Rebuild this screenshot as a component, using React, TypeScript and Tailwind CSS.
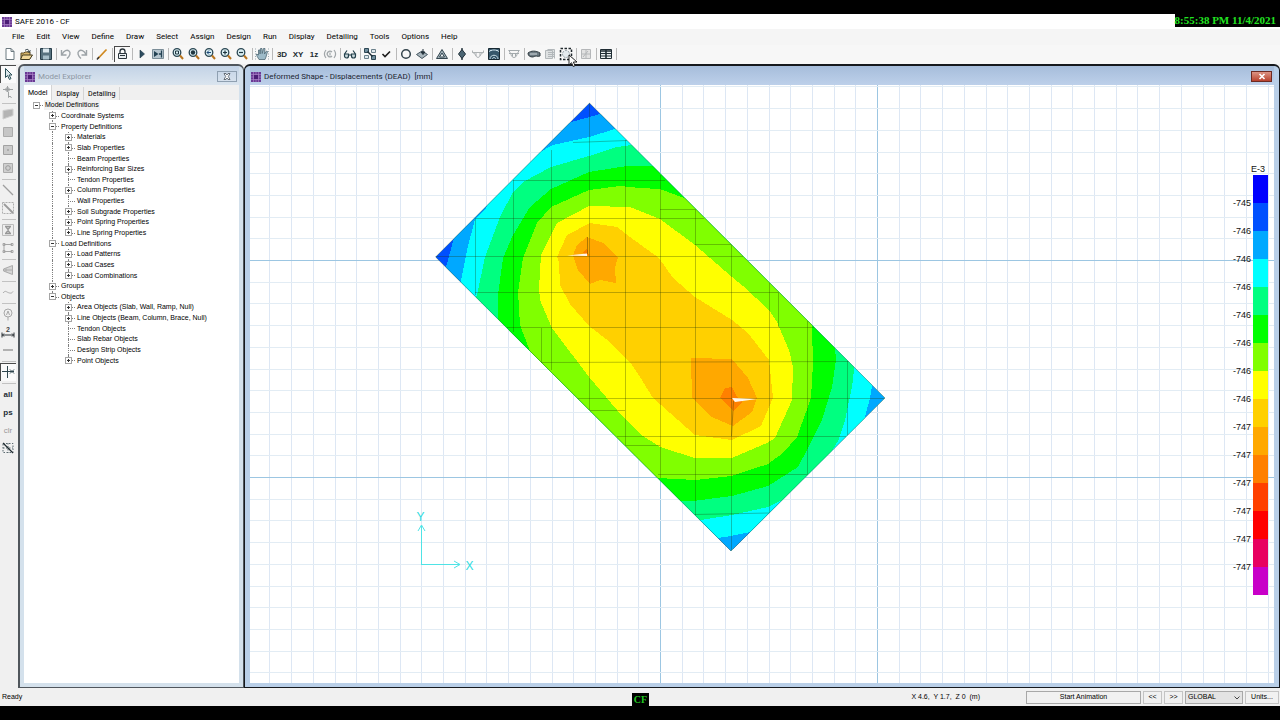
import { useState } from "react";
import type { ReactNode } from "react";
import clsx from "clsx";

const SEP = "sep";

interface Tool {
  name: string;
  art: ReactNode;
  dim?: boolean;
  pressed?: boolean;
}

interface TreeRow {
  level: 0 | 1 | 2;
  text: string;
  box?: "+" | "-";
  last?: boolean;
  guide?: boolean;
}

const MENUS = ["File", "Edit", "View", "Define", "Draw", "Select", "Assign", "Design", "Run", "Display", "Detailing", "Tools", "Options", "Help"];

/* ---------- toolbar drawings, all on a 16 x 16 box ---------- */

function Magnifier({ children }: { children?: ReactNode }) {
  return (
    <>
      <circle cx="7" cy="6.5" r="3.800" fill="#d9eef2" stroke="#2b4753" strokeWidth="1.3" />
      <path d="M10 9.5l3 3.500" stroke="#b8751f" strokeWidth="2" />
      {children}
    </>
  );
}

const glyph = (label: string) => (
  <text x="8" y="11" textAnchor="middle" fontSize="8" fontWeight="700" fill="#222c33" stroke="none" fontFamily="Liberation Sans, sans-serif">
    {label}
  </text>
);

const TOP_TOOLS: (Tool | typeof SEP)[] = [
  { name: "New", art: <path d="M4 2.5h5l3 3v8H4zM9 2.500v3h3" fill="#fff" stroke="#6c7a80" /> },
  {
    name: "Open",
    art: (
      <>
        <path d="M3 7h3l1-1h5v7H3z" fill="#d8b56a" stroke="#5d4a25" />
        <path d="M4.500 9h10l-3 4.500H2.500z" fill="#f2d89a" stroke="#40391f" />
        <path d="M7 4.500c2-2 4-1 4 1m-1.500-.5l1.500 1.500 1.500-2" stroke="#27343c" />
      </>
    ),
  },
  SEP,
  {
    name: "Save",
    art: (
      <>
        <path d="M2.500 2.500h11v11h-11z" fill="#58727f" stroke="#263c48" />
        <path d="M5 2.500h6v4H5z" fill="#dbe8ee" stroke="none" />
        <path d="M5 9.500h6v4H5z" fill="#a7bfca" stroke="none" />
      </>
    ),
  },
  SEP,
  { name: "Undo", dim: true, art: <path d="M3.500 4v5h5M4 8.500c2-4 5-5 7-3.500s1 5-2 7.500" stroke="#878f94" strokeWidth="1.400" /> },
  { name: "Redo", dim: true, art: <path d="M12.500 4v5h-5M12 8.500c-2-4-5-5-7-3.500s-1 5 2 7.500" stroke="#878f94" strokeWidth="1.400" /> },
  SEP,
  {
    name: "Edit pen",
    art: (
      <>
        <path d="M4 12.500l8.500-9" stroke="#d08a22" strokeWidth="1.800" />
        <path d="M3 13.500l2-2.500" stroke="#333" strokeWidth="1.400" />
      </>
    ),
  },
  SEP,
  {
    name: "Lock model",
    pressed: true,
    art: (
      <>
        <path d="M6 7V5.500a2.500 2.500 0 015 0V7" stroke="#2a353c" strokeWidth="1.300" />
        <path d="M4.500 7.500h8v5h-8zM6 9.500h5" fill="#e8edef" stroke="#2a353c" />
      </>
    ),
  },
  SEP,
  { name: "Run analysis", art: <path d="M6 4v8l4.500-4z" fill="#2e4d60" stroke="#1d3644" strokeWidth=".6" /> },
  {
    name: "Run detailing",
    art: (
      <>
        <path d="M2.500 3.500h11v9h-11z" fill="#b7c6cf" stroke="#7b8d98" />
        <path d="M4 5v6l4.500-3z" fill="#234152" stroke="none" />
        <path d="M11.500 4.500v7M9 8h2" stroke="#234152" strokeWidth="1.300" />
      </>
    ),
  },
  SEP,
  { name: "Zoom window", art: <Magnifier><path d="M5.500 5h3v3h-3z" stroke="#1f3640" /></Magnifier> },
  { name: "Zoom full", art: <Magnifier><circle cx="7" cy="6.500" r="2.200" fill="#1f3640" stroke="none" /></Magnifier> },
  { name: "Zoom previous", art: <Magnifier><path d="M9 6.500H5l2-2M5 6.500l2 2" stroke="#1f4a7a" /></Magnifier> },
  { name: "Zoom in", art: <Magnifier><path d="M5 6.500h4M7 4.500v4" stroke="#1f3640" strokeWidth="1.200" /></Magnifier> },
  { name: "Zoom out", art: <Magnifier><path d="M5 6.500h4" stroke="#1f3640" strokeWidth="1.200" /></Magnifier> },
  SEP,
  {
    name: "Pan",
    art: (
      <>
        <path d="M5 13.500c-1-2-2.500-3.500-2.500-5.500l2 1V4H6v4l.5-5.500H8l.2 5 1.300-5H11L10.500 8l2-3 1 .5L12 11l-1 2.500z" fill="#9dbac8" stroke="#4f6874" strokeWidth=".8" />
        <path d="M1.500 2.500v11M14.500 2.500v11" stroke="#9aa9b0" strokeDasharray="1 1.500" />
      </>
    ),
  },
  SEP,
  { name: "3D view", art: glyph("3D") },
  { name: "XY view", art: glyph("XY") },
  { name: "Z view", art: glyph("1z") },
  { name: "Rotate", dim: true, art: <path d="M4 4c-2 2.500-2 5.500 0 8M12 4c2 2.500 2 5.500 0 8M10 6a2.800 2.800 0 100 4M8 6.500v3" stroke="#8b9296" strokeWidth="1.200" /> },
  SEP,
  { name: "Perspective", art: <path d="M2.500 8L5 4.500M13.500 8L11 4.500M2.500 8h4v2a2 2 0 01-4 0zM9.500 8h4v2a2 2 0 01-4 0zM6.500 9h3" stroke="#24414c" strokeWidth="1.200" fill="#c9d8dc" /> },
  SEP,
  {
    name: "Shrink",
    art: (
      <>
        <path d="M2.500 2.500h4v4h-4zM9.500 9.500h4v4h-4z" fill="#6f8d9d" stroke="#2d4754" />
        <path d="M9.500 3.500h4v3h-4zM2.500 9.500h4v3h-4z" fill="#dfe9ee" stroke="#6a808b" />
        <path d="M5.500 5.500l5 5" stroke="#1c2d36" strokeWidth="1.400" />
      </>
    ),
  },
  { name: "Check", art: <path d="M4.500 8l2.500 2.500L12 5.500" stroke="#1d1d1d" strokeWidth="1.600" /> },
  SEP,
  { name: "Display options", art: <circle cx="8" cy="8" r="4.300" stroke="#33434c" strokeWidth="1.500" /> },
  {
    name: "Assign",
    art: (
      <>
        <path d="M2.500 8.500L8 5l5.500 3.500L8 12.500z" fill="#a9b6bd" stroke="#465761" />
        <path d="M9 3v4M7 6l2 2.500L11 6z" fill="#22313a" stroke="#22313a" />
      </>
    ),
  },
  SEP,
  {
    name: "Show undeformed",
    art: (
      <>
        <path d="M8 3.500l5.500 9h-11z" fill="#a4b4bb" stroke="#33454f" />
        <path d="M8 7l2.500 4h-5z" fill="#eef2f4" stroke="#33454f" />
      </>
    ),
  },
  SEP,
  {
    name: "Show loads",
    art: (
      <>
        <path d="M8 2v12" stroke="#22313a" strokeWidth="1.400" />
        <path d="M8 3.500L11.500 8 8 12.500 4.500 8z" fill="#4c6674" stroke="#22313a" />
      </>
    ),
  },
  { name: "Show reactions", dim: true, art: <path d="M2.500 4.500v2c3 0 3 5 5.500 5s2.500-5 5.500-5v-2M2.500 6.500h11M6 6.500v3.500M10 6.500v3.500" stroke="#9aa0a3" /> },
  {
    name: "Show slab forces",
    art: (
      <>
        <path d="M2.500 2.500h11v11h-11z" fill="#36576b" stroke="#172832" />
        <path d="M4 13c0-5 8-5 8 0M3 5.500c3-2 7-2 10 0M6.500 13c0-2 3-2 3 0M4 4.500h2M10 4.500h2" stroke="#c8dce6" />
      </>
    ),
  },
  SEP,
  { name: "Show strip forces", dim: true, art: <path d="M2.500 4.500h11M3 7.500h10M3 4.500l2 4c1 4 5 4 6 0l2-4M6.500 7.500v3M9.500 7.500v3" stroke="#8f979b" /> },
  SEP,
  {
    name: "Show tendons",
    art: (
      <>
        <path d="M2 7c3-2.500 8-2.500 12 0v3c-3 1-4-1-7 1-3 0-5-1-5-4z" fill="#6c7a82" stroke="#303b41" />
        <path d="M4 8h7" stroke="#d3dade" />
      </>
    ),
  },
  { name: "Show report", dim: true, art: <path d="M3.500 4.500h7v8h-7zM5.500 3.500h7v9M6 6.500h7M6 8.500h7M6 10.500h7" fill="#d9dcdd" stroke="#a2a8ab" /> },
  {
    name: "Show section",
    art: (
      <>
        <path d="M2.500 2.500h11v11h-11z" stroke="#20282d" strokeWidth="1.500" strokeDasharray="2.500 1.500" />
        <circle cx="8" cy="8" r="3.500" fill="#e4eaed" stroke="#8d999f" strokeDasharray="2 1" />
      </>
    ),
  },
  SEP,
  { name: "Detailing view", dim: true, art: <path d="M3.500 3.500h9v9h-9zM8 3.500v9M3.500 8h9M5 11l5-6" fill="#dedede" stroke="#a5a8aa" /> },
  SEP,
  {
    name: "Show tables",
    art: (
      <>
        <path d="M2.500 3.500h11v9h-11z" fill="#e9eff1" stroke="#1f2c33" />
        <path d="M2.500 5h11M8 3.500v9" stroke="#1f2c33" strokeWidth="1.600" />
        <path d="M2.500 7.500h11M2.500 10h11" stroke="#1f2c33" />
      </>
    ),
  },
  SEP,
];

const SIDE_TOOLS: (Tool | typeof SEP)[] = [
  { name: "Pointer", pressed: true, art: <path d="M5.500 2.500v9l2-2 2 4 1.500-1-2-3.500h3z" fill="#dce8ec" stroke="#2c5058" /> },
  { name: "Reshape", dim: true, art: <path d="M3 5.500h10M7.500 2v6M6 4h3v3H6zM8.500 8v5.500l1.500-1.500 1.500 2" stroke="#8b8f91" /> },
  SEP,
  { name: "Draw slab", dim: true, art: <path d="M3 4.500l10-1.500v6.500L3 13z" fill="#a6a6a6" stroke="#c8c8c8" /> },
  { name: "Quick slab", dim: true, art: <path d="M3.500 3.500h9v9h-9z" fill="#bcbcbc" stroke="#9a9a9a" /> },
  { name: "Slab at point", dim: true, art: <path d="M3.500 3.500h9v9h-9zM7.500 7.500h1v1h-1z" fill="#c3c3c3" stroke="#8f8f8f" /> },
  { name: "Slab around point", dim: true, art: <><path d="M3.500 3.500h9v9h-9z" fill="#c8c8c8" stroke="#9a9a9a" /><circle cx="8" cy="8" r="2.300" stroke="#858585" /></> },
  SEP,
  { name: "Draw line", dim: true, art: <path d="M3 3l10 10" stroke="#8a8a8a" strokeWidth="1.200" /> },
  { name: "Quick line", dim: true, art: <><path d="M2.500 2.500h11v11h-11z" stroke="#9e9e9e" strokeDasharray="2 1" /><path d="M4 4l9 9" stroke="#858585" strokeWidth="1.800" /></> },
  SEP,
  { name: "Draw column", dim: true, art: <><path d="M2.500 2.500h11v11h-11z" fill="#eee" stroke="#b0b0b0" /><path d="M5 4.500h6M5 11.500h6M6 5l2 2.500L10 5M6 11l2-2.500 2 2.500" stroke="#828282" strokeWidth="1.300" /></> },
  { name: "Draw wall", dim: true, art: <path d="M4 4v8M4 4.500h8M4 11.500h8M3 3.500h2v2H3zM11 3.500h2v2h-2zM3 10.500h2v2H3zM11 10.500h2v2h-2z" stroke="#949494" /> },
  SEP,
  { name: "Draw ramp", dim: true, art: <path d="M12.500 3.500v9l-9-3.500V7zM3.500 8h9M6 6.500v3" fill="#cfcfcf" stroke="#9a9a9a" /> },
  SEP,
  { name: "Draw tendon", dim: true, art: <path d="M3 9c2.500-3 3.500-1 5-.5S11.500 10 13 7.500" stroke="#9a9a9a" /> },
  SEP,
  { name: "Draw rebar", dim: true, art: <><circle cx="8" cy="7" r="4" stroke="#979797" /><path d="M6.500 9L8 5l1.500 4M8 11v3.500" stroke="#979797" /></> },
  { name: "Dimension", art: <><text x="8" y="8" textAnchor="middle" fontSize="7" fontWeight="700" fill="#444" stroke="none" fontFamily="Liberation Sans, sans-serif">2</text><path d="M2 8.500v5M14 8.500v5M2 11h12M4 9.500L2.500 11 4 12.500M12 9.500l1.500 1.500-1.500 1.500" stroke="#2c3236" /></> },
  { name: "Strip", dim: true, art: <path d="M3 8h10" stroke="#a2a2a2" strokeWidth="2" /> },
  SEP,
  { name: "Snap to points", pressed: true, art: <path d="M2 7.500h12M7.500 2v12M10 5.500l4 4M14 5.500l-4 4" stroke="#2f464e" /> },
  SEP,
  { name: "Select all", art: glyph("all") },
  { name: "Previous selection", art: glyph("ps") },
  { name: "Clear selection", dim: true, art: <text x="8" y="11" textAnchor="middle" fontSize="8" fill="#858585" stroke="none" fontFamily="Liberation Sans, sans-serif">clr</text> },
  { name: "Intersecting line", art: <><path d="M3 3.500h10v9H3zM3 8h10M8 3v10" stroke="#5b6a71" strokeDasharray="1.500 1.500" /><path d="M3 3l10 10" stroke="#1f2b31" strokeWidth="1.200" /></> },
];

/* ---------- model tree ---------- */

const TREE: TreeRow[] = [
  { level: 0, text: "Model Definitions", box: "-", last: true },
  { level: 1, text: "Coordinate Systems", box: "+" },
  { level: 1, text: "Property Definitions", box: "-" },
  { level: 2, text: "Materials", box: "+", guide: true },
  { level: 2, text: "Slab Properties", box: "+", guide: true },
  { level: 2, text: "Beam Properties", guide: true },
  { level: 2, text: "Reinforcing Bar Sizes", box: "+", guide: true },
  { level: 2, text: "Tendon Properties", guide: true },
  { level: 2, text: "Column Properties", box: "+", guide: true },
  { level: 2, text: "Wall Properties", guide: true },
  { level: 2, text: "Soil Subgrade Properties", box: "+", guide: true },
  { level: 2, text: "Point Spring Properties", box: "+", guide: true },
  { level: 2, text: "Line Spring Properties", box: "+", guide: true, last: true },
  { level: 1, text: "Load Definitions", box: "-" },
  { level: 2, text: "Load Patterns", box: "+", guide: true },
  { level: 2, text: "Load Cases", box: "+", guide: true },
  { level: 2, text: "Load Combinations", box: "+", guide: true, last: true },
  { level: 1, text: "Groups", box: "+" },
  { level: 1, text: "Objects", box: "-", last: true },
  { level: 2, text: "Area Objects (Slab, Wall, Ramp, Null)", box: "+" },
  { level: 2, text: "Line Objects (Beam, Column, Brace, Null)", box: "+" },
  { level: 2, text: "Tendon Objects" },
  { level: 2, text: "Slab Rebar Objects" },
  { level: 2, text: "Design Strip Objects" },
  { level: 2, text: "Point Objects", box: "+", last: true },
];

/* ---------- contour plot, drawn in window units ---------- */

const SLAB = "589.5,103 885,398 731,551 435.5,257";

// painted from the outer band to the inner one
const BANDS: [string, string][] = [
  ["#0050ff", SLAB],
  ["#00a8ff", "568,123 600,114 900,114 900,560 446,560 446,267 454,238 480,190"],
  ["#00ffff", "540,152 553,145 589,137 615,129 900,200 880,350 872,386 870,398 865,417 840,500 750,532 731,536 718,538 600,560 440,400 461,281 467,250 475,219 486,208 500,170"],
  ["#00ff80", "632,145 617,147 589,156 551,167 523,182 513,192 500,217 485,257 477,295 440,400 640,580 701,520 732,515 768,507 780,501 820,500 832,451 839,439 845,420 852,387 854,370 860,200"],
  ["#00ff00", "652,166 627,166 589,172 551,189 530,207 513,235 503,258 498,295 498,340 600,540 682,501 693,501 732,496 768,486 798,467 808,448 822,420 832,387 836,360 835,348 850,200"],
  ["#80ff00", "684,198 660,189 640,188 620,186 589,190 551,207 537,223 523,258 518,292 520,325 530,351 560,500 658,478 695,480 732,476 768,464 783,453 797,437 811,398 813,363 812,327 840,200"],
  ["#ffff00", "589,206 630,207 660,219 695,245 732,277 743,286 769,310 777,322 789,350 793,367 792,400 775,438 767,443 732,458 695,458 660,447 640,434 617,410 589,377 552,328 540,300 539,288 541,255 557,223"],
  ["#ffd000", "590,223 617,227 630,237 659,258 673,278 695,297 732,320 748,333 769,360 773,398 761,426 732,440 695,435 653,398 640,377 632,365 610,342 589,326 570,304 560,285 559,262 557,257 567,235"],
  ["#ffa800", "587,237 603,243 618,257 615,268 616,283 600,280 590,284 578,270 573,255 577,245"],
  ["#ffa800", "691,358 732,359 748,378 757,398 752,412 733,426 712,417 692,398"],
  ["#ff8000", "720,398 725,388 732,387 737,397 742,402 733,411"],
  ["#ff8000", "583,253 587,248 589,256"],
];

const MESH =
  "M589.500 103V410M475.500 219V295M513.500 180V332M551.500 150V370M625.500 140V445M660.500 175V478M695.500 209V515M731.500 244V551M769.500 283V514M807.500 321V475M778.500 292V327M541.500 328V363M847.500 361V436" +
  "M573 142.500L627 140.500M513 180.500H665M475 218.500H704M435 256.500H743M475 292.500H778M507 327.500H814M541 362.500L849 361.500M577 398.500H885M617 436.500H846M625 445.500H660M658 474.500H807M695 514.500L769 513M660 209.500H695M695 244.500H731M590 410.500H625";

// one grid step is a tenth of the 217 unit bay
const steps = Array.from({ length: 80 }, (_, i) => i - 40);
const GRID_V = steps.map((i) => ({ at: Math.round(660 + i * 21.7) + 0.5, major: i === 0 || i === 10 }));
const GRID_H = steps.map((i) => ({ at: Math.round(260 + i * 21.7) + 0.5, major: i % 10 === 0 }));

const LEGEND = [
  { swatch: "bg-[#0000ff]", label: "-745" },
  { swatch: "bg-[#0050ff]", label: "-746" },
  { swatch: "bg-[#00a8ff]", label: "-746" },
  { swatch: "bg-[#00ffff]", label: "-746" },
  { swatch: "bg-[#00ff80]", label: "-746" },
  { swatch: "bg-[#00ff00]", label: "-746" },
  { swatch: "bg-[#80ff00]", label: "-746" },
  { swatch: "bg-[#ffff00]", label: "-746" },
  { swatch: "bg-[#ffd000]", label: "-747" },
  { swatch: "bg-[#ffa800]", label: "-747" },
  { swatch: "bg-[#ff8000]", label: "-747" },
  { swatch: "bg-[#ff4000]", label: "-747" },
  { swatch: "bg-[#ff0000]", label: "-747" },
  { swatch: "bg-[#e80060]", label: "-747" },
  { swatch: "bg-[#c800c8]", label: "" },
];

function AppLogo() {
  return (
    <svg viewBox="0 0 10 10" className="h-[10px] w-[10px] shrink-0" aria-hidden="true">
      <rect width="10" height="10" fill="#6a3a94" />
      <path d="M0 2.500h10M0 5h10M0 7.500h10M2.500 0v10M5 0v10M7.500 0v10" stroke="#b08acb" strokeWidth=".6" />
      <rect x="3" y="3" width="4" height="4" fill="#4b1d75" />
    </svg>
  );
}

function ToolButton({ tool, vertical }: { tool: Tool; vertical?: boolean }) {
  return (
    <button
      type="button"
      aria-label={tool.name}
      className={clsx(
        "relative flex w-4 shrink-0 items-center justify-center",
        vertical ? "h-[18px]" : "h-4",
        tool.pressed && "bg-[#fafafa] shadow-[inset_1px_1px_0_#4a4a4a]",
      )}
    >
      <svg viewBox="0 0 16 16" className={clsx("h-4 w-4 shrink-0", tool.dim && "opacity-80")} fill="none">
        {tool.art}
      </svg>
    </button>
  );
}

function Tree() {
  return (
    <ul role="tree" aria-label="Model" className="grid h-[266px] auto-rows-fr pl-1 text-[7px] leading-[10px]">
      {TREE.map((row) => (
        <li key={row.text} role="treeitem" aria-level={row.level + 1} className="flex items-center whitespace-nowrap">
          {row.level > 0 && <span className="w-4 self-stretch" />}
          {row.level > 1 && (
            <span className="flex w-4 justify-center self-stretch">
              {row.guide && <span className="border-l border-dotted border-[#808080]" />}
            </span>
          )}
          <span className="relative flex w-4 items-center justify-center self-stretch">
            {row.level > 0 && (
              <span
                className={clsx(
                  "absolute left-2 top-0 border-l border-dotted border-[#808080]",
                  row.last ? "h-1/2" : "h-full",
                )}
              />
            )}
            <span className="absolute left-2 top-[5px] w-[7px] border-t border-dotted border-[#808080]" />
            {row.box && (
              <button
                type="button"
                aria-label={(row.box === "+" ? "Expand " : "Collapse ") + row.text}
                className="relative flex h-[7px] w-[7px] items-center justify-center border border-[#a5a5a5] bg-white"
              >
                <svg viewBox="0 0 5 5" className="h-[5px] w-[5px] shrink-0">
                  <path d={row.box === "+" ? "M1 2.500h3M2.500 1v3" : "M1 2.500h3"} stroke="#333" />
                </svg>
              </button>
            )}
          </span>
          <span className={clsx("px-px", row.level === 0 && "bg-[#f0f0f0]")}>{row.text}</span>
        </li>
      ))}
    </ul>
  );
}

function ModelExplorer() {
  const [tab, setTab] = useState("Model");
  return (
    <section className="flex w-[226px] shrink-0 flex-col rounded-t-md border-2 border-r border-b border-[#50565c] bg-[#d4e1ec] px-1 pb-1">
      <header className="flex h-[19px] shrink-0 items-center gap-[3px] bg-linear-to-b from-[#c3d3e6] to-[#dbe5ef] pt-0.5 pr-0.5 pl-px">
        <AppLogo />
        <h2 className="font-[Roboto,sans-serif] text-[8px] text-[#8d97a3]">Model Explorer</h2>
        <button
          type="button"
          aria-label="Close Model Explorer"
          className="ml-auto flex h-[11px] w-5 items-center justify-center border border-[#8fa0b1]"
        >
          <svg viewBox="0 0 8 7" className="h-[7px] w-2">
            <path d="M1 .5h2l1 1.500 1-1.500h2L5.300 3.500 7 6.500H5L4 5 3 6.500H1l1.700-3z" fill="#fff" stroke="#49535d" strokeWidth=".8" />
          </svg>
        </button>
      </header>
      <div role="tablist" className="flex h-[15px] shrink-0 items-end bg-[#f0f0f0] font-[Roboto,sans-serif] text-[7px] leading-[10px]">
        {["Model", "Display", "Detailing"].map((name) => (
          <button
            key={name}
            type="button"
            role="tab"
            aria-selected={tab === name}
            onClick={() => setTab(name)}
            className={clsx(
              "border-r border-[#d4d4d4] px-1",
              tab === name ? "h-[15px] bg-white" : "h-[13px]",
            )}
          >
            {name}
          </button>
        ))}
      </div>
      <div className="min-h-0 flex-1 overflow-hidden bg-white">
        <Tree />
      </div>
    </section>
  );
}

function ContourPlot() {
  return (
    <svg viewBox="250 85 1024 598" preserveAspectRatio="xMidYMid slice" className="h-full w-full" fill="none">
      {GRID_V.map((l) => (
        <path key={l.at} d={`M${l.at} -200V1000`} stroke={l.major ? "#9cc6e2" : "#dde7f4"} />
      ))}
      {GRID_H.map((l) => (
        <path key={l.at} d={`M-200 ${l.at}H2000`} stroke={l.major ? "#9cc6e2" : "#e2ecf4"} />
      ))}
      <clipPath id="slab">
        <polygon points={SLAB} />
      </clipPath>
      <g clipPath="url(#slab)">
        {BANDS.map(([color, points]) => (
          <polygon key={points} points={points} fill={color} shapeRendering="crispEdges" />
        ))}
        <path d={MESH} stroke="#1d3300" strokeOpacity=".3" />
        <path d="M587.500 237V254M733.500 401L731.500 436" stroke="#5d4a00" strokeOpacity=".5" />
        <path d="M567 255.500L587 253.500V256zM732 398L757 399 735 402z" fill="#fff8ec" />
      </g>
      <polygon points={SLAB} stroke="#28551a" strokeOpacity=".35" />
      <path d="M421.500 565V526M418 531l3.500-6 3.500 6M421 564.500h39M454 561l6 3.500-6 3.500" stroke="#4fe3e6" />
      <g fill="#2fdce0" fontSize="12" fontFamily="Liberation Sans, sans-serif" textAnchor="middle">
        <text x="420.500" y="521">Y</text>
        <text x="469.500" y="570">X</text>
      </g>
    </svg>
  );
}

function PlotWindow() {
  return (
    <section className="flex min-w-0 flex-1 flex-col rounded-t-md border border-t-2 border-[#16191d] bg-[#b9cfe8] px-[5px] pb-1">
      <header className="flex h-[19px] shrink-0 items-center gap-[3px] bg-linear-to-b from-[#a6bddb] to-[#bdd0ea] pt-0.5 pr-0.5 pl-px">
        <AppLogo />
        <h2 className="font-[Roboto,sans-serif] text-[8px] whitespace-pre text-[#1b2430]">
          {"Deformed Shape - Displacements (DEAD)  [mm]"}
        </h2>
        <button
          type="button"
          aria-label="Close plot"
          className="ml-auto flex h-[11px] w-[21px] items-center justify-center border border-[#6d2a22] bg-linear-to-b from-[#dc9384] to-[#b8402c]"
        >
          <svg viewBox="0 0 8 7" className="h-[7px] w-2">
            <path d="M1.500 1l5 5M6.500 1l-5 5" stroke="#fff" strokeWidth="1.600" />
          </svg>
        </button>
      </header>
      <div className="relative min-h-0 flex-1 overflow-hidden bg-white">
        <ContourPlot />
        <div className="absolute top-[78px] right-[6px] flex flex-col items-end text-[9px] leading-3 text-[#111]">
          <span className="pr-[3px]">E-3</span>
          {LEGEND.map((step) => (
            <div key={step.swatch} className="flex h-7 items-end gap-0.5">
              <span className="translate-y-1/2">{step.label}</span>
              <span className={clsx("h-full w-[15px]", step.swatch)} />
            </div>
          ))}
        </div>
      </div>
    </section>
  );
}

export default function App() {
  return (
    <div className="flex h-screen flex-col overflow-hidden bg-black py-[14px] font-['Liberation_Sans',Arial,sans-serif] text-black">
      <div className="flex h-[15px] shrink-0 items-center gap-[3px] bg-white pl-0.5">
        <AppLogo />
        <h1 className="font-[Roboto,sans-serif] text-[8px]">SAFE 2016 - CF</h1>
        <time className="ml-auto self-start bg-black pr-1 font-['Liberation_Serif',serif] text-[11px] leading-[13px] font-bold text-[#22e322]">
          8:55:38 PM 11/4/2021
        </time>
      </div>

      <nav className="flex h-4 shrink-0 items-center gap-3 bg-[#f5f5f5] pl-3 font-[Roboto,sans-serif] text-[8px]">
        {MENUS.map((menu) => (
          <button key={menu} type="button">
            {menu}
          </button>
        ))}
      </nav>

      <div className="flex h-[19px] shrink-0 items-center bg-[#f7f7f7] pb-px pl-0.5">
        {TOP_TOOLS.map((tool, i) =>
          tool === SEP ? (
            <span key={i} className="flex h-4 w-1 justify-center py-0.5">
              <span className="border-l border-[#b9b9b9]" />
            </span>
          ) : tool.name === "Show section" ? (
            <span key={i} className="relative">
              <ToolButton tool={tool} />
              {/* mouse pointer */}
              <svg viewBox="0 0 10 14" className="absolute top-1/2 left-[10px] z-10 h-[14px] w-[10px]">
                <path d="M1 1v10l2.500-2.300L5.200 12.500l1.800-.8L5.400 8H9z" fill="#fff" stroke="#111" strokeWidth=".9" />
              </svg>
            </span>
          ) : (
            <ToolButton key={i} tool={tool} />
          ),
        )}
      </div>

      <main className="flex min-h-0 flex-1 bg-[#f0f0f0]">
        <aside className="flex w-[18px] shrink-0 flex-col pt-px">
          {SIDE_TOOLS.map((tool, i) =>
            tool === SEP ? (
              <span key={i} className="flex h-1 w-4 flex-col justify-center pl-0.5">
                <span className="border-t border-[#c2c2c2]" />
              </span>
            ) : (
              <ToolButton key={i} tool={tool} vertical />
            ),
          )}
        </aside>
        <ModelExplorer />
        <PlotWindow />
      </main>

      <footer className="flex h-[18px] shrink-0 items-center bg-[#f0f0f0] text-[7px] leading-[10px]">
        <span className="flex-1 pl-0.5">Ready</span>
        <span className="self-end bg-black px-0.5 font-['Liberation_Serif',serif] text-[10px] leading-[13px] font-bold text-[#22c822]">CF</span>
        <div className="flex flex-1 items-center justify-end gap-0.5 pr-px">
          <span className="mr-11 whitespace-pre">{"X 4.6,  Y 1.7,  Z 0  (m)"}</span>
          <button type="button" className="h-[13px] w-[115px] border border-[#a8a8a8] bg-[#f1f1f1]">
            Start Animation
          </button>
          <button type="button" className="h-[13px] w-[19px] border border-[#c4c4c4] bg-[#f1f1f1]">
            {"<<"}
          </button>
          <button type="button" className="h-[13px] w-[19px] border border-[#c4c4c4] bg-[#f1f1f1]">
            {">>"}
          </button>
          <div className="relative">
            <select
              aria-label="Coordinate system"
              className="block h-[13px] w-[58px] appearance-none border border-[#a8a8a8] bg-[#e3e3e3] pl-0.5"
            >
              <option>GLOBAL</option>
            </select>
            <svg viewBox="0 0 6 4" className="pointer-events-none absolute top-[5px] right-[3px] h-1 w-[6px]" fill="none">
              <path d="M.5 .5L3 3 5.500 .5" stroke="#444" />
            </svg>
          </div>
          <button type="button" className="h-[13px] w-[34px] border border-[#c4c4c4] bg-[#f1f1f1]">
            Units...
          </button>
        </div>
      </footer>
    </div>
  );
}
